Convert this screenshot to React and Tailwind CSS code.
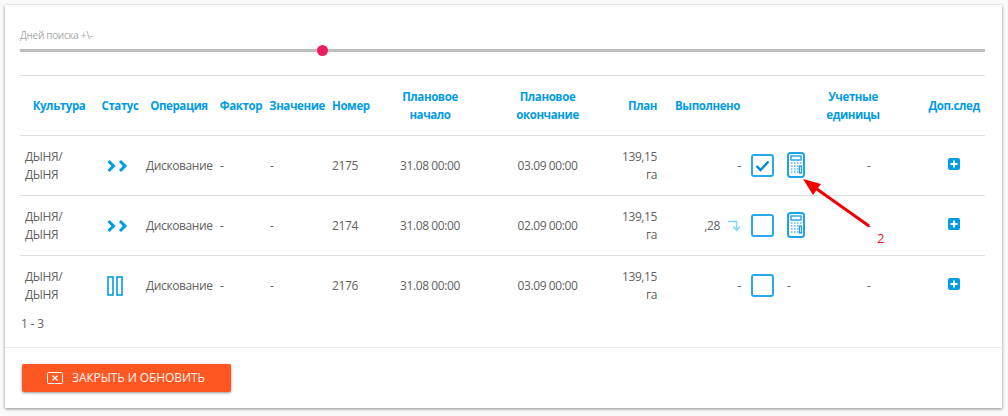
const FONT = { fontFamily: '"Open Sans", sans-serif' };

const rows = [
  { status: "run", num: "2175", end: "03.09 00:00", done: "-", checked: true, calc: true },
  { status: "run", num: "2174", end: "02.09 00:00", done: ",28", turn: true, checked: false, calc: true },
  { status: "pause", num: "2176", end: "03.09 00:00", done: "-", checked: false, calc: false },
];

function Chevrons() {
  return (
    <svg width="21" height="14" viewBox="0 0 21 14" fill="none" stroke="#039be5" strokeWidth="3">
      <path d="M1.500 2l5 5-5 5M13 2l5 5-5 5" />
    </svg>
  );
}

function Pause() {
  return (
    <svg width="16" height="20" viewBox="0 0 16 20" fill="none" stroke="#039be5" strokeWidth="1.600">
      <rect x="1" y="1" width="5" height="18" />
      <rect x="10" y="1" width="5" height="18" />
    </svg>
  );
}

function CheckBox({ checked }) {
  return (
    <div className="flex h-[23px] w-[23px] items-center justify-center rounded-[3px] border-2 border-[#29a8ea]">
      {checked && (
        <svg width="15" height="12" viewBox="0 0 15 12" fill="none" stroke="#0288d1" strokeWidth="2.400">
          <path d="M1.500 6l4 4 8-8.500" />
        </svg>
      )}
    </div>
  );
}

function Calc() {
  return (
    <svg width="18" height="26" viewBox="0 0 18 26" fill="none" className="-mt-[2px] block">
      <rect x="1" y="1" width="16" height="24" rx="2.500" stroke="#1ea2ea" strokeWidth="2" />
      <rect x="4" y="4" width="10" height="4" stroke="#1ea2ea" strokeWidth="1.400" />
      <path d="M4 11h1.500M7 11h1.500M10 11h1.500M13 11h1.500M4 14h1.500M7 14h1.500M10 14h1.500M4 17h1.500M7 17h1.500M10 17h1.500M4 20h1.500M7 20h1.500M10 20h1.500" stroke="#4fb6ec" strokeWidth="1.500" />
      <rect x="12.500" y="14" width="2" height="7" stroke="#1ea2ea" strokeWidth="1.300" />
    </svg>
  );
}

function Turn() {
  return (
    <svg width="13" height="12" viewBox="0 0 13 12" fill="none" stroke="#81d4fa" strokeWidth="1.400">
      <path d="M0 1.500h8.500v8M5 6.500l3.500 4 3.500-4" />
    </svg>
  );
}

function PlusBox() {
  return (
    <div className="flex h-[12px] w-[12px] items-center justify-center rounded-[2px] bg-[#039be5]">
      <svg width="8" height="8" viewBox="0 0 8 8" stroke="#fff" strokeWidth="2">
        <path d="M4 0.500v7M0.500 4h7" />
      </svg>
    </div>
  );
}

export default function App() {
  return (
    <div style={FONT} className="h-[416px] w-[1008px] overflow-hidden bg-[#fafafa] pl-[5px] pt-[5px]">
      <div className="relative flex h-[403px] w-[997px] flex-col bg-white shadow-[0_1px_3px_rgba(0,0,0,0.45)]">
        <div className="px-[15px]">
          <div className="pt-[24px] text-[10px] leading-[13px] tracking-[-0.3px] text-[#a8a8a8]">Дней поиска +\-</div>
          <div className="relative mt-[7px] h-[3px] w-[965px] bg-[#bdbdbd]">
            <div className="absolute left-[297px] top-[-4px] h-[11px] w-[11px] rounded-full bg-[#e91e63]" />
          </div>

          <table className="mt-[23px] w-[965px] table-fixed border-collapse border-t border-[#e0e0e0] text-[12px] tracking-[-0.4px] text-[#616161]">
            <colgroup>
              <col className="w-[78px]" />
              <col className="w-[44px]" />
              <col className="w-[74px]" />
              <col className="w-[50px]" />
              <col className="w-[62px]" />
              <col className="w-[47px]" />
              <col className="w-[110px]" />
              <col className="w-[125px]" />
              <col className="w-[52px]" />
              <col className="w-[84px]" />
              <col className="w-[68px]" />
              <col className="w-[80px]" />
              <col className="w-[91px]" />
            </colgroup>
            <thead>
              <tr className="h-[60px] border-b border-[#e0e0e0] text-center text-[11.500px] font-bold leading-[18px] text-[#039be5]">
                <th>Культура</th>
                <th>Статус</th>
                <th>Операция</th>
                <th>Фактор</th>
                <th>Значение</th>
                <th className="pl-1 text-left">Номер</th>
                <th>Плановое<br />начало</th>
                <th>Плановое<br />окончание</th>
                <th className="pr-[5px] text-right">План</th>
                <th className="pl-[7px]">Выполнено</th>
                <th />
                <th className="pr-[2px]">Учетные<br />единицы</th>
                <th className="pl-[29px]">Доп.след</th>
              </tr>
            </thead>
            <tbody>
              {rows.map((r) => (
                <tr key={r.num} className="h-[60px] border-b border-[#e0e0e0] leading-[18px] last:border-b-0">
                  <td className="pl-[5px]">ДЫНЯ/<br />ДЫНЯ</td>
                  <td className="pl-[9px]">
                    {r.status === "run" ? <Chevrons /> : <Pause />}
                  </td>
                  <td className="pl-[4px]">Дискование</td>
                  <td className="pl-[4px]">-</td>
                  <td className="pl-[4px]">-</td>
                  <td className="pl-[4px]">{r.num}</td>
                  <td className="text-center">31.08 00:00</td>
                  <td className="text-center">{r.end}</td>
                  <td className="pr-[5px] text-right">139,15<br />га</td>
                  <td className="pr-[5px]">
                    <div className="flex items-center justify-end gap-[8px]">
                      <span>{r.done}</span>
                      {r.turn && <Turn />}
                    </div>
                  </td>
                  <td className="pl-[5px]">
                    <div className="flex items-center gap-[13px]">
                      <CheckBox checked={r.checked} />
                      {r.calc ? <Calc /> : <span>-</span>}
                    </div>
                  </td>
                  <td className="pl-[53px]">-</td>
                  <td className="pl-[54px]">
                    <div className="-mt-[4px]"><PlusBox /></div>
                  </td>
                </tr>
              ))}
            </tbody>
          </table>
          <div className="-mt-[1px] pl-px text-[12px] leading-[18px] tracking-[-0.2px] text-[#616161]">1 - 3</div>
        </div>

        <div className="mt-[14px] border-t border-[#eeeeee] pl-[17px] pt-[16px]">
          <button className="flex h-[28px] w-[209px] items-center gap-[9px] rounded-[2px] bg-[#ff5722] pl-[25px] text-[12px] tracking-[-0.1px] text-[#fff3ee] shadow-[0_1px_3px_rgba(0,0,0,0.4)]">
            <svg width="16" height="12" viewBox="0 0 16 12" fill="none" stroke="#fff" strokeWidth="1">
              <rect x="0.500" y="0.500" width="15" height="11" rx="1" />
              <path d="M5.500 3.500l5 5M10.500 3.500l-5 5" strokeWidth="1.300" />
            </svg>
            ЗАКРЫТЬ И ОБНОВИТЬ
          </button>
        </div>

        {/* красная стрелка-пометка поверх таблицы */}
        <svg className="absolute left-[795px] top-[170px]" width="75" height="55" viewBox="0 0 75 55" fill="none">
          <path d="M69 51L14 12" stroke="#f00000" strokeWidth="3" />
          <path d="M3 4L21 9L13 20Z" fill="#f00000" />
        </svg>
        <div className="absolute left-[872px] top-[224px] text-[13px] leading-[18px] text-[#f01010]">2</div>
      </div>
    </div>
  );
}
